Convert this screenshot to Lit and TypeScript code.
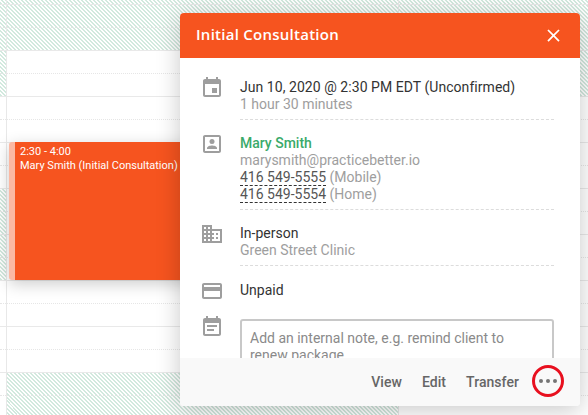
import { LitElement, html, css, svg } from "lit";
import { customElement } from "lit/decorators.js";
import { classMap } from "lit/directives/class-map.js";

const ROWS = Array.from({ length: 19 }, (_, i) => i);
const COLS: { cls: string; hatched: (i: number) => boolean }[] = [
  { cls: "gutter", hatched: (i) => i <= 4 || (i >= 9 && i <= 12) },
  { cls: "main", hatched: (i) => i <= 2 || i >= 17 },
  { cls: "side", hatched: (i) => i <= 4 },
];

const icon = (cls: string, d: unknown) =>
  html`<svg class="icon ${cls}" viewBox="0 0 24 24" width="24" height="24">${d}</svg>`;

const ICONS = {
  event: svg`<path d="M17 12h-5v5h5v-5zM16 1v2H8V1H6v2H5c-1.11 0-1.99.9-1.99 2L3 19c0 1.1.89 2 2 2h14c1.1 0 2-.9 2-2V5c0-1.1-.9-2-2-2h-1V1h-2zm3 18H5V8h14v11z"/>`,
  person: svg`<path d="M19 5v14H5V5h14m0-2H5c-1.1 0-2 .9-2 2v14c0 1.1.9 2 2 2h14c1.1 0 2-.9 2-2V5c0-1.1-.9-2-2-2z"/><circle cx="12" cy="9.5" r="2.5"/><path d="M7 17v-1c0-1.7 3.3-2.5 5-2.5s5 .8 5 2.5v1H7z"/>`,
  domain: svg`<path d="M12 7V3H2v18h20V7H12zM6 19H4v-2h2v2zm0-4H4v-2h2v2zm0-4H4V9h2v2zm0-4H4V5h2v2zm4 12H8v-2h2v2zm0-4H8v-2h2v2zm0-4H8V9h2v2zm0-4H8V5h2v2zm10 12h-8v-2h2v-2h-2v-2h2v-2h-2V9h8v10zm-2-8h-2v2h2v-2zm0 4h-2v2h2v-2z"/>`,
  card: svg`<path d="M20 4H4c-1.11 0-1.99.89-1.99 2L2 18c0 1.11.89 2 2 2h16c1.11 0 2-.89 2-2V6c0-1.11-.89-2-2-2zm0 14H4v-6h16v6zm0-10H4V6h16v2z"/>`,
  note: svg`<path d="M17 10H7v2h10v-2zm2-7h-1V1h-2v2H8V1H6v2H5c-1.11 0-1.99.9-1.99 2L3 19c0 1.1.89 2 2 2h14c1.1 0 2-.9 2-2V5c0-1.1-.9-2-2-2zm0 16H5V8h14v11zm-5-5H7v2h7v-2z"/>`,
};

@customElement("app-root")
export class AppRoot extends LitElement {
  static styles = css`
    :host {
      display: block;
      position: relative;
      width: 588px;
      height: 415px;
      overflow: hidden;
      background: #fff;
      font-family: Roboto, "Liberation Sans", sans-serif;
      font-size: 14px;
      line-height: 17px;
      color: #333;
    }
    .grid { display: flex; height: 100%; }
    .col { display: flex; flex-direction: column; flex: none; }
    .gutter { width: 7px; border-right: 1px solid #e8e8e8; box-sizing: border-box; }
    .main { width: 392px; border-right: 1px solid #e8e8e8; box-sizing: border-box; }
    .side { flex: 1; }
    .slot { height: 23px; flex: none; box-sizing: border-box; border-bottom: 1px dotted #e6e6e6; }
    .slot.first { height: 5px; }
    .slot.even { border-bottom: 1px solid #e9e9e9; }
    .slot.hatch {
      background: repeating-linear-gradient(45deg, #d2e9de 0, #d2e9de 1.4142px, #fff 1.4142px, #fff 2.8284px) fixed;
    }
    .appt {
      position: absolute;
      left: 9px;
      top: 142px;
      width: 200px;
      height: 138px;
      box-sizing: border-box;
      padding: 3px 0 0 5px;
      background: #f6541f;
      border-left: 6px solid #fbb8a3;
      border-radius: 3px;
      box-shadow: 0 4px 16px rgba(0, 0, 0, 0.2);
      color: #fff;
      font-size: 11px;
      line-height: 14px;
    }
    .popup {
      position: absolute;
      left: 180px;
      top: 13px;
      width: 400px;
      height: 393px;
      display: flex;
      flex-direction: column;
      background: #fff;
      border-radius: 4px;
      overflow: hidden;
      box-shadow: 0 4px 24px rgba(0, 0, 0, 0.22);
    }
    .head {
      flex: none;
      height: 45px;
      display: flex;
      align-items: center;
      justify-content: space-between;
      padding: 0 16px 0 16px;
      background: #f6541f;
      color: #fff;
      font-family: "Open Sans", sans-serif;
      font-size: 15px;
      font-weight: 600;
      letter-spacing: 0.26px;
    }
    .title { margin-top: -2px; }
    .close { display: block; fill: #fff; }
    .body {
      flex: 1;
      min-height: 0;
      overflow: hidden;
      padding: 21px 26px 0 20px;
    }
    .row { display: flex; }
    .icon { flex: none; display: block; fill: #9e9e9e; margin-right: 16px; }
    .i-event, .i-person, .i-domain, .i-card { margin-top: -3px; }
    .i-note { margin-top: -4px; }
    .info {
      flex: 1;
      min-width: 0;
      padding-bottom: 6px;
      border-bottom: 1px dashed #dcdcdc;
    }
    .when { letter-spacing: 0.05px; }
    .row + .row { margin-top: 15px; }
    .row.pay { margin-top: 16px; }
    .row.pay .info, .row.notes .info { border: 0; padding: 0; }
    .row.notes { margin-top: 16px; }
    .muted { color: #9e9e9e; }
    .name { color: #3aaa6a; font-weight: 500; }
    .phone { color: #555; border-bottom: 1px dashed #333; }
    textarea {
      display: block;
      width: 100%;
      height: 70px;
      box-sizing: border-box;
      border: 2px solid #c8c8c8;
      border-radius: 3px;
      padding: 9px 8px;
      margin: 0;
      resize: none;
      outline: none;
      font: inherit;
      line-height: 17px;
      color: #333;
      background: #fff;
    }
    textarea::placeholder { color: #8a8a8a; opacity: 1; }
    .foot {
      flex: none;
      height: 48px;
      position: relative;
      display: flex;
      align-items: center;
      justify-content: flex-end;
      gap: 20px;
      padding: 0 16px 0 0;
      background: #f9f9f9;
      color: #666;
      font-weight: 500;
      letter-spacing: 0.05px;
    }
    .more { display: block; margin: -2px 0 0 -7px; }
  `;

  render() {
    return html`
      <div class="grid">
        ${COLS.map(
          (c) => html`<div class="col ${c.cls}">
            ${ROWS.map(
              (i) => html`<div
                class=${classMap({
                  slot: true,
                  first: i === 0,
                  even: i % 2 === 0,
                  hatch: c.hatched(i),
                })}
              ></div>`
            )}
          </div>`
        )}
      </div>

      <div class="appt">
        <div>2:30 - 4:00</div>
        <div>Mary Smith (Initial Consultation)</div>
      </div>

      <div class="popup">
        <div class="head">
          <span class="title">Initial Consultation</span>
          <svg class="close" viewBox="0 0 24 24" width="21" height="21">
            <path d="M19 6.41 17.59 5 12 10.59 6.41 5 5 6.41 10.59 12 5 17.59 6.41 19 12 13.41 17.59 19 19 17.59 13.41 12z" />
          </svg>
        </div>
        <div class="body">
          <div class="row">
            ${icon("i-event", ICONS.event)}
            <div class="info">
              <div class="when">Jun 10, 2020 @ 2:30 PM EDT (Unconfirmed)</div>
              <div class="muted">1 hour 30 minutes</div>
            </div>
          </div>
          <div class="row">
            ${icon("i-person", ICONS.person)}
            <div class="info">
              <div class="name">Mary Smith</div>
              <div class="muted">marysmith@practicebetter.io</div>
              <div><span class="phone">416 549-5555</span> <span class="muted">(Mobile)</span></div>
              <div><span class="phone">416 549-5554</span> <span class="muted">(Home)</span></div>
            </div>
          </div>
          <div class="row">
            ${icon("i-domain", ICONS.domain)}
            <div class="info">
              <div>In-person</div>
              <div class="muted">Green Street Clinic</div>
            </div>
          </div>
          <div class="row pay">
            ${icon("i-card", ICONS.card)}
            <div class="info">Unpaid</div>
          </div>
          <div class="row notes">
            ${icon("i-note", ICONS.note)}
            <div class="info">
              <textarea placeholder="Add an internal note, e.g. remind client to renew package"></textarea>
            </div>
          </div>
        </div>
        <div class="foot">
          <span>View</span>
          <span>Edit</span>
          <span>Transfer</span>
          <svg class="more" viewBox="0 0 32 32" width="32" height="32">
            <circle cx="16" cy="16" r="14.5" fill="none" stroke="#e8101f" stroke-width="3" />
            <circle cx="9" cy="16" r="2" fill="#757575" />
            <circle cx="16" cy="16" r="2" fill="#757575" />
            <circle cx="23" cy="16" r="2" fill="#757575" />
          </svg>
        </div>
      </div>
    `;
  }
}
